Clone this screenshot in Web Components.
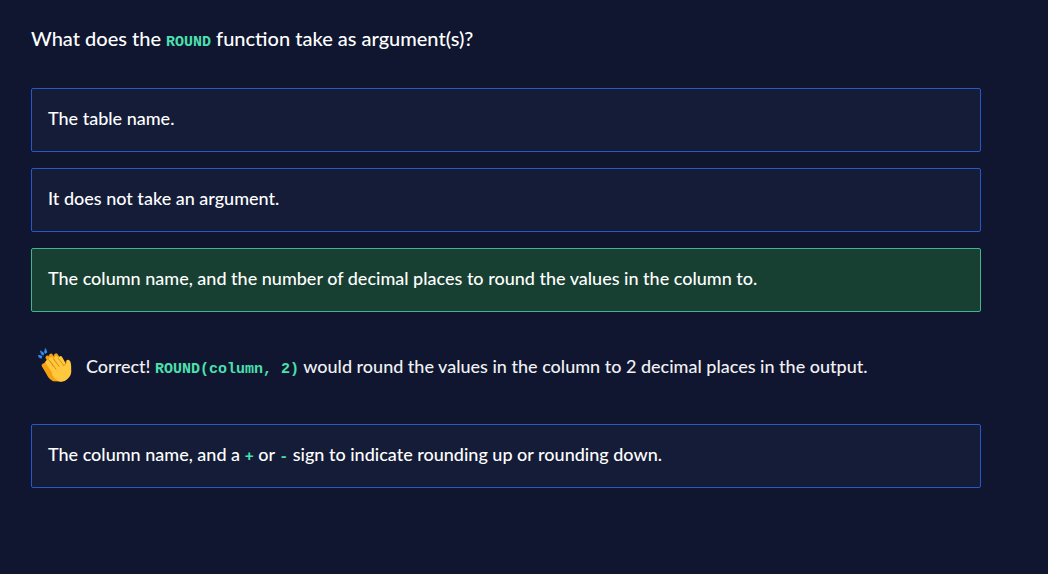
<!DOCTYPE html>
<html lang="en">
<head>
<meta charset="utf-8">
<meta name="viewport" content="width=device-width, initial-scale=1">
<title>Quiz</title>
<style>
  body {
    margin: 0;
    background: #10162f;
    color: #fff;
    font-family: Lato, "Liberation Sans", sans-serif;
    font-weight: 500;
  }
</style>
</head>
<body>
<quiz-question>
  <span slot="prompt">What does the <code-token>ROUND</code-token> function take as argument(s)?</span>
  <quiz-option>The table name.</quiz-option>
  <quiz-option>It does not take an argument.</quiz-option>
  <quiz-option correct>The column name, and the number of decimal places to round the values in the column to.</quiz-option>
  <quiz-feedback>Correct! <code-token>ROUND(column, 2)</code-token> would round the values in the column to 2 decimal places in the output.</quiz-feedback>
  <quiz-option>The column name, and a <code-token>+</code-token> or <code-token>-</code-token> sign to indicate rounding up or rounding down.</quiz-option>
</quiz-question>

<script>
  const define = (name, html, setup) => {
    const template = document.createElement('template');
    template.innerHTML = html;
    customElements.define(name, class extends HTMLElement {
      constructor() {
        super();
        this.attachShadow({ mode: 'open' }).append(template.content.cloneNode(true));
      }
      connectedCallback() {
        if (setup) setup(this);
      }
    });
  };

  define('code-token', `
    <style>
      :host { display: inline; }
      code {
        font: bold 15px "Liberation Mono", monospace;
        line-height: 1;
        color: #4be0ae;
      }
    </style>
    <code><slot></slot></code>`);

  define('clap-icon', `
    <style>
      :host { display: block; width: 36px; height: 36px; flex: none; }
      svg { display: block; width: 100%; height: 100%; }
    </style>
    <svg viewBox="0 0 36 36" role="img" aria-label="Clapping hands" fill="none" stroke-linecap="round" stroke-linejoin="round">
      <g fill="#3b94f5" stroke="#3b94f5" stroke-width=".7">
        <path d="M.4 7.4 3.8 8 3.4 10.2 1.8 9.8Z"/>
        <path d="M2.7 3 5.9 5.3 5.2 7.2 3.6 6.2Z"/>
        <path d="M7.6 .8 8.9 4.2 7.4 5.4 6.6 4.3Z"/>
      </g>
      <path d="M5.7 17.5 13 29M9.5 9.5 17 22M13 7.6 22 20M18 7.4 26 19" stroke="#f5a013" stroke-width="4"/>
      <path d="M3.8 17.5 9 12 24 21 24 33.5 15 33.2Q12 32 10 28.8Z" fill="#f5a013"/>
      <path d="M9.5 14.2 18 27M13 10.8 23 25M18 9.8 27 24M22.5 10.2 28 20" stroke="#ffc83d" stroke-width="4"/>
      <path d="M13 19 26.5 17.5Q28.2 16.2 28.2 13 29.4 10.8 31.8 12.8 33.4 15 33.2 21 34 27 29.5 31 25.5 35.2 19.5 32.8 16.5 31 14.5 27.5Z" fill="#ffc83d"/>
      <path d="M11.5 12.5 18 21.2M15.7 11.5 21.2 18.5M20.4 10.5 25 16.5M25 17.4Q28.5 17.2 28.2 13.2" stroke="#d99016" stroke-width="1"/>
    </svg>`);

  define('quiz-option', `
    <style>
      :host { display: block; }
      button {
        display: block;
        width: 100%;
        min-height: 64px;
        padding: 15px 16px 19px;
        border: 1px solid #2458cb;
        border-radius: 2px;
        background: #151c38;
        color: #fff;
        font: inherit;
        line-height: 28px;
        text-align: left;
        cursor: pointer;
      }
      :host([correct]) button { background: #184032; border-color: #3fb68b; }
    </style>
    <button type="button"><slot></slot></button>`,
    el => el.shadowRoot.querySelector('button').setAttribute('aria-pressed', el.hasAttribute('correct')));

  define('quiz-feedback', `
    <style>
      :host {
        display: flex;
        box-sizing: border-box;
        align-items: center;
        gap: 12px;
        min-height: 80px;
        padding: 0 0 4px 7px;
        color: #f0f1f4;
        line-height: 28px;
      }
      p { margin: 0; }
    </style>
    <clap-icon></clap-icon>
    <p role="status"><slot></slot></p>`);

  define('quiz-question', `
    <style>
      :host { display: block; padding: 22px 67px 24px 31px; font-size: 18px; }
      h1 { margin: 0 0 34px; font-size: 20px; font-weight: inherit; line-height: 32px; }
      .answers { display: grid; gap: 16px; }
    </style>
    <h1><slot name="prompt"></slot></h1>
    <div class="answers"><slot></slot></div>`);
</script>
</body>
</html>
